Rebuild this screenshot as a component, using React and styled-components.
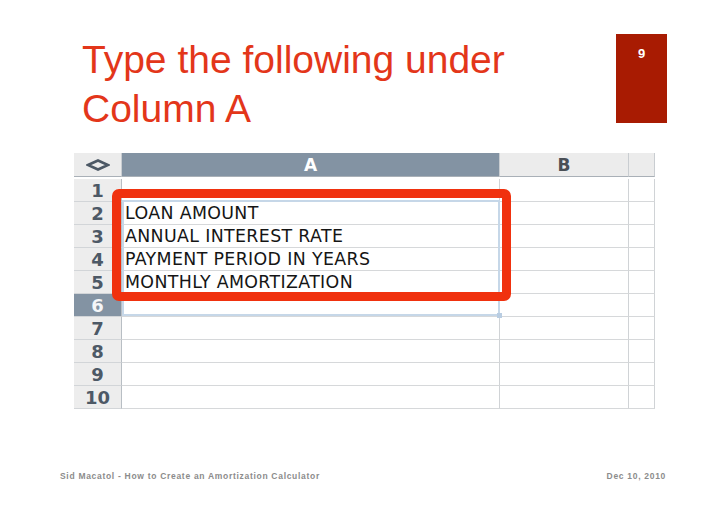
import React from "react"
import styled, { createGlobalStyle } from "styled-components"

const GlobalStyle = createGlobalStyle`
  html, body {
    margin: 0;
    padding: 0;
    background: #ffffff;
  }
`

const Slide = styled.div`
  width: 728px;
  height: 514px;
  overflow: hidden;
  background: #ffffff;
  font-family: "Liberation Sans", Arial, sans-serif;
`

const Top = styled.div`
  display: flex;
  justify-content: space-between;
  align-items: flex-start;
  padding: 34px 61px 0 82px;
`

const Title = styled.h1`
  margin: 1px 0 0 0;
  font-family: "Liberation Sans", Arial, sans-serif;
  font-weight: normal;
  font-size: 39px;
  line-height: 49px;
  color: #e3361a;
`

const PageBox = styled.div`
  width: 51px;
  height: 89px;
  background: #a81b02;
  color: #ffffff;
  font-weight: bold;
  font-size: 13px;
  text-align: center;
  padding-top: 12px;
  box-sizing: border-box;
`

const Sheet = styled.div`
  position: relative;
  margin: 20px 0 0 74px;
  width: 581px;
  display: grid;
  grid-template-columns: 48px 378px 129px 26px;
  grid-template-rows: 24px;
  grid-auto-rows: 23px;
  border-top: 2px solid #8e9396;
  font-family: "DejaVu Sans", Verdana, sans-serif;
`

const ColHead = styled.div`
  display: flex;
  align-items: center;
  justify-content: center;
  background: ${p => (p.$active ? "#8393a3" : "#ececec")};
  color: ${p => (p.$active ? "#ffffff" : "#4a4f56")};
  border-right: 1px solid #c9cdd1;
  border-bottom: 1px solid #a9b0b7;
  font-weight: bold;
  font-size: 17px;
  box-sizing: border-box;
  margin-top: -2px;
  height: 24px;
`

const RowHead = styled.div`
  display: flex;
  align-items: center;
  justify-content: center;
  background: ${p => (p.$active ? "#8393a3" : "#ededed")};
  color: ${p => (p.$active ? "#f4f6f8" : "#4d5966")};
  border-right: 1px solid #b8bec4;
  border-bottom: 1px solid #d2d5d8;
  font-weight: bold;
  font-size: 18px;
  box-sizing: border-box;
`

const Cell = styled.div`
  border-right: 1px solid #d0d3d6;
  border-bottom: 1px solid #d6d8da;
  box-sizing: border-box;
  padding-left: 3px;
  font-size: 17.4px;
  letter-spacing: 0.35px;
  line-height: 22px;
  color: #151515;
  white-space: nowrap;
  overflow: hidden;
`

const Selection = styled.div`
  position: absolute;
  left: 48px;
  top: 45px;
  width: 378px;
  height: 116px;
  border: 2px solid #c6d7e8;
  box-sizing: border-box;
  pointer-events: none;
`

const Handle = styled.div`
  position: absolute;
  right: -4px;
  bottom: -4px;
  width: 5px;
  height: 5px;
  background: #b9cde2;
`

const Highlight = styled.div`
  position: absolute;
  left: 38px;
  top: 34px;
  width: 399px;
  height: 112px;
  border: 9px solid #f0310e;
  border-radius: 7px;
  box-sizing: border-box;
  pointer-events: none;
`

const Footer = styled.div`
  display: flex;
  justify-content: space-between;
  padding: 0 62px 0 60px;
  margin-top: 61px;
  font-size: 8.5px;
  line-height: 12px;
  font-weight: bold;
  letter-spacing: 0.7px;
  color: #8c8c8c;
`

const Diamond = () => (
  <svg width="24" height="12" viewBox="0 0 24 12">
    <polygon
      points="2,6 12,1.5 22,6 12,10.5"
      fill="none"
      stroke="#4d5966"
      strokeWidth="2.6"
      strokeLinejoin="miter"
    />
  </svg>
)

const entries = {
  2: "LOAN AMOUNT",
  3: "ANNUAL INTEREST RATE",
  4: "PAYMENT PERIOD IN YEARS",
  5: "MONTHLY AMORTIZATION"
}

const rows = [1, 2, 3, 4, 5, 6, 7, 8, 9, 10]

const App = () => (
  <Slide>
    <GlobalStyle />
    <Top>
      <Title>
        Type the following under
        <br />
        Column A
      </Title>
      <PageBox>9</PageBox>
    </Top>
    <Sheet>
      <ColHead>
        <Diamond />
      </ColHead>
      <ColHead $active>A</ColHead>
      <ColHead>B</ColHead>
      <ColHead />
      {rows.map(n => (
        <React.Fragment key={n}>
          <RowHead $active={n === 6}>{n}</RowHead>
          <Cell>{entries[n] || ""}</Cell>
          <Cell />
          <Cell />
        </React.Fragment>
      ))}
      <Selection>
        <Handle />
      </Selection>
      <Highlight />
    </Sheet>
    <Footer>
      <span>Sid Macatol - How to Create an Amortization Calculator</span>
      <span>Dec 10, 2010</span>
    </Footer>
  </Slide>
)

export default App
